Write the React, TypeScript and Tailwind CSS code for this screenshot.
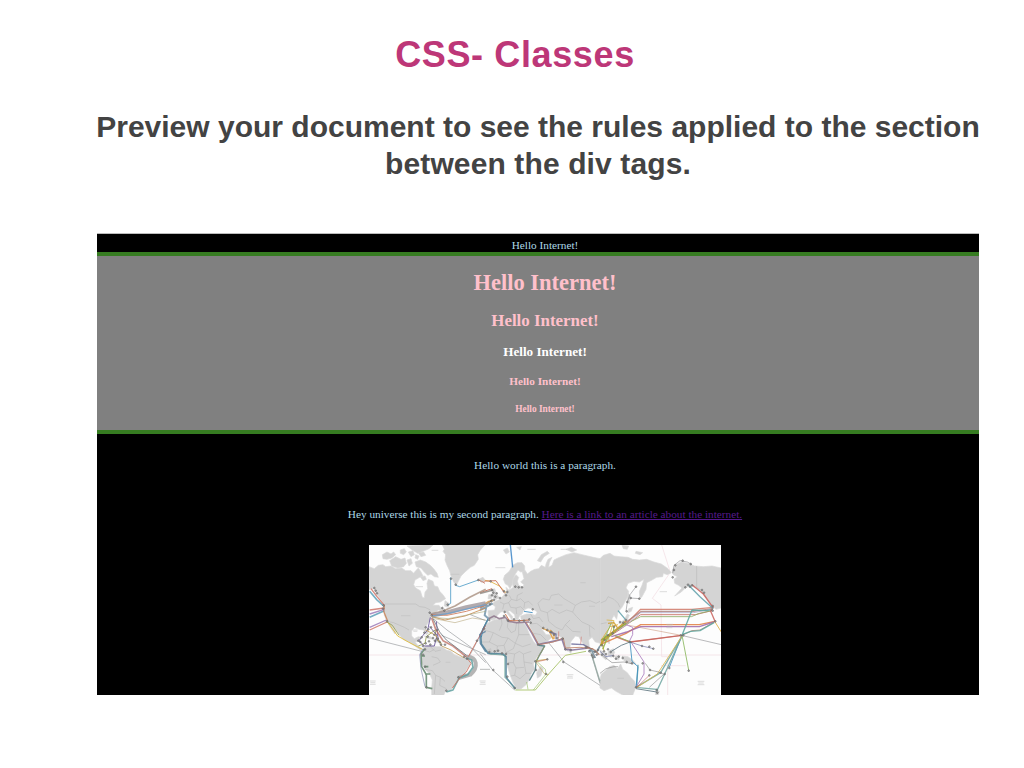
type Line = [color: string, d: string, width?: number];

const AMERICAS_LAND = [
  // Canada, United States and Mexico
  "M12 80L28 86 40 76 54 74 62 80 78 78 92 86 110 84 122 92 138 92 146 100 152 92 160 84 168 96 174 108 164 112 150 120 146 134 152 144 166 152 172 172 178 174 180 156 188 146 186 130 190 118 204 124 208 138 218 140 224 154 234 164 242 176 226 186 212 188 204 196 222 196 228 204 238 206 230 214 220 210 210 220 198 226 198 238 188 250 182 262 190 280 184 284 176 270 162 268 148 262 140 272 140 288 148 296 160 290 168 292 162 304 150 306 160 318 172 326 166 330 150 318 134 308 114 298 106 288 94 272 80 256 92 276 90 282 76 262 66 244 58 226 56 206 58 194 46 178 34 160 26 146 12 148Z",
  // Arctic islands
  "M52 44L66 36 78 42 86 36 92 44 80 54 66 58 54 56ZM74 62L92 50 108 58 120 54 124 70 116 80 98 84 80 78ZM106 30L118 26 124 36 116 44 106 40ZM130 36L144 32 148 44 138 50ZM152 44L162 48 158 58 150 54ZM126 60L138 56 142 70 132 78ZM150 66L166 60 182 66 196 76 206 86 216 100 220 112 208 110 198 102 188 106 178 96 168 84 154 80ZM126 18L176 15 204 15 192 26 174 34 158 40 142 30ZM160 38L176 36 182 46 168 50ZM166 110L180 108 184 118 174 122Z",
  // Greenland
  "M232 15L238 28 234 34 242 44 240 60 246 76 254 92 258 108 266 126 274 136 280 124 288 108 300 96 316 82 328 76 340 58 338 44 346 30 360 15Z",
  // Newfoundland and Caribbean
  "M240 182L252 190 250 202 238 198ZM178 288L196 290 206 298 190 296ZM208 300L224 300 222 306 208 306Z",
  // South America
  "M176 322L188 316 200 318 216 320 230 320 244 330 258 334 268 344 284 350 302 354 316 362 314 376 304 390 300 406 284 414 276 430 266 440 256 452 242 452 236 466 200 466 200 444 202 420 194 402 180 388 170 368 172 344 178 332Z",
  "M340 118L354 112 360 120 350 128Z",
];

const EURASIA_LAND = [
  // Europe and Asia
  "M26 232L24 212 44 210 46 200 36 192 46 184 60 178 72 164 80 154 78 142 86 150 92 148 100 142 96 128 98 118 108 104 116 112 112 124 116 136 128 142 132 134 122 126 132 116 126 92 136 92 142 102 152 94 164 88 176 86 184 76 196 82 198 72 204 58 216 52 208 68 206 82 216 76 222 60 234 54 258 44 282 38 306 44 340 52 361 56 361 310 346 306 336 292 326 300 328 320 318 326 306 306 296 290 286 288 272 306 270 322 262 334 254 318 248 296 238 288 218 286 206 274 190 262 186 268 198 284 208 284 216 292 202 304 176 316 168 300 158 278 148 256 152 244 136 242 124 242 122 228 140 222 152 222 166 226 172 216 158 206 144 204 132 210 126 222 118 228 114 240 106 238 104 224 90 212 84 214 98 230 96 240 88 228 76 214 62 216 52 226 46 238 34 240Z",
  // Scandinavia
  "M76 132L70 118 74 106 88 94 98 76 112 68 126 68 134 78 134 94 122 96 114 90 106 102 100 116 96 134 90 146 84 136Z",
  // Britain, Ireland and the Mediterranean islands
  "M36 148L44 146 50 162 58 174 44 180 38 170ZM26 164L36 162 34 176 24 176ZM84 238L96 242 90 246Z",
  // Novaya Zemlya and arctic islands
  "M172 62L184 44 202 34 208 40 192 50 182 66ZM70 30L82 24 88 36 78 42ZM110 22L124 20 120 30ZM258 28L274 22 290 30 276 36Z",
  // Africa
  "M22 250L42 240 64 236 80 238 84 246 98 250 116 246 132 250 140 262 148 282 160 304 172 318 194 318 184 338 170 352 160 372 164 388 154 400 148 418 138 434 124 446 110 448 100 430 90 404 82 378 80 358 72 344 52 342 32 344 16 332 4 314 4 288 12 270Z",
  // Madagascar and Sri Lanka
  "M182 378L190 386 182 408 172 414 170 398ZM270 326L276 332 272 340 266 334Z",
];

const PACIFIC_LAND = [
  // East Asia and Siberia
  "M0 56L10 46 30 40 42 48 60 50 84 52 98 58 118 60 140 58 162 66 184 72 204 86 214 98 202 104 190 100 188 110 170 112 156 120 140 128 138 148 126 170 120 176 118 154 126 136 132 118 118 126 102 124 84 130 78 144 86 154 80 176 66 202 54 216 50 238 42 226 36 236 38 252 24 264 20 284 6 298 0 306Z",
  "M82 156L90 166 88 192 82 182ZM86 206L98 202 94 214 84 218ZM82 222L88 226 80 244 66 252 56 250 72 240ZM22 292L30 298 28 312 20 304Z",
  "M66 16L86 18 82 28 70 26ZM108 34L128 38 120 44 106 40Z",
  // Alaska
  "M216 92L228 74 244 66 262 70 284 78 310 80 336 78 364 84 364 204 348 208 334 196 322 178 308 158 292 146 274 138 258 142 244 156 224 168 246 144 236 136 224 130 222 118 232 110 220 104Z",
  // Indonesia and New Guinea
  "M0 330L14 338 22 352 18 360 4 348ZM24 334L40 326 44 338 34 352 24 348ZM46 348L60 346 56 360 46 358ZM66 348L84 350 100 362 108 372 90 370 72 362Z",
  // Australia
  "M0 418L4 402 16 392 28 380 42 376 52 386 62 372 68 388 82 398 92 412 104 424 108 440 98 466 70 466 48 454 34 444 12 452 0 444Z",
  "M168 448L178 454 174 466 166 466Z",
];

const AMERICAS_BORDERS = [
  "M60 192H152L164 200 180 202 196 210M66 244L86 248 104 256 118 262 132 270M174 330L194 336 208 328M196 320L210 334 228 330M200 350L218 354 226 366 204 376M180 388L202 392 212 406 226 412 240 424M212 406L208 462M226 412L224 436 244 446",
];

const EURASIA_BORDERS = [
  "M12 270L40 278 66 292 84 294M64 236L66 252 58 272M84 246L82 262 94 278 106 272 110 248M116 248V284L106 310M40 278L28 306 4 306M28 306L52 318 72 316 84 294 106 310M116 284H148M52 318L50 342M72 316L78 338 100 326 106 310 128 320 152 312M78 338L104 342 118 334 130 342 154 334M104 342L100 368 84 368M130 342L132 366 156 370M100 368L108 384 132 382M108 384L104 406 92 408M132 366L138 400 154 400M104 406L120 416 138 400M20 332L32 326 34 344",
  "M60 186L72 192 86 188 94 178 110 182 122 176 134 188 146 184 158 196M72 192L68 208M86 188L92 202 108 204 122 200 134 212M94 178L88 166M110 182L112 166 128 158M108 204L110 222M134 188L132 204",
  "M174 190L188 176 208 180 214 166 236 162 252 176 266 184 286 196 304 186 330 182 348 190 360 184M286 196L278 216 290 230 306 246 328 256 344 268M174 190L182 212 202 218 216 208 238 220 260 210 278 216M202 218L206 244 228 262 246 270 256 254 270 240M150 252L170 250 188 264M160 280L182 284 198 300M152 222L160 236 178 232 188 246M256 254L278 274 302 276M328 256L330 290",
];

const PACIFIC_BORDERS = ["M0 190L18 182 24 170 42 178 54 190 60 202M0 252L20 248M290 78V142L304 150 320 174"];

const AMERICAS_CABLES: Line[] = [
  ["#529fc8", "M257 112V190L248 196M272 136L284 140 340 120", 3],
  ["#c06c58", "M340 120L350 124 360 130", 3],
  ["#ad9586", "M196 222L232 214 270 198 314 172 362 148", 5],
  ["#a49b9f", "M200 226L246 218 304 202 362 190", 13],
  ["#ce7a58", "M198 224L246 226 304 214 362 196", 3],
  ["#6fa0cb", "M202 228L250 220 310 206 362 194", 4],
  ["#c98f56", "M200 230L240 240 300 228 362 204", 3],
  ["#a3a375", "M202 232L250 236 362 214", 2],
  ["#b5a478", "M208 236L270 248 322 234 362 240", 2],
  ["#85888c", "M14 294L170 334M200 232L246 270 318 322 362 368M310 354L362 256M230 286L362 344M316 224L362 242", 2],
  ["#5b9fb7", "M14 154L36 180 58 200M14 232L58 212", 5],
  ["#ce7568", "M14 210L58 204M14 270L66 246M18 146L36 170 58 196", 4],
  ["#c98458", "M58 196L56 214 68 244", 4],
  ["#9b7ab8", "M14 222L58 208M14 262L64 240", 4],
  ["#e0bb35", "M66 244L98 288 130 306 172 328", 3],
  ["#959d4f", "M66 246L82 256 102 286M160 318L180 310 184 290 210 270 216 300 230 310", 3],
  ["#67539a", "M196 232L188 270 174 286 162 302 178 318 208 318 216 286 194 260M214 244L220 302", 3],
  ["#c47c72", "M200 234L212 268 234 302 264 318 306 352", 5],
  ["#747c83", "M204 236L224 276 244 300 310 350", 3],
  ["#c39f59", "M182 270L212 286 230 318 258 330 298 354", 3],
  ["#a8a8a8", "M306 350C336 350 342 382 316 404L280 414", 12],
  ["#62876c", "M178 328L168 342 170 380 184 404V442L202 446M170 348H180M178 380H190M180 402H196", 5],
  ["#6d77a3", "M174 326L164 344 168 386 180 440", 2],
  ["#60a0a0", "M302 354L320 360 324 382 308 404 282 414 264 450 244 456", 5],
  ["#ce705e", "M306 354L318 370 304 396 286 412 262 444M310 350L336 302", 3],
  ["#5b82a0", "M362 274L344 284 346 310 362 336", 4],
  ["#b65453", "M336 302L362 256", 2],
];

const EURASIA_CABLES: Line[] = [
  ["#3984c5", "M91 14L98 82", 4],
  ["#e0b040", "M0 118L30 124 58 138 78 158", 3],
  ["#c96b52", "M0 124L48 122 74 160M0 158L36 146", 3],
  ["#928c86", "M0 204L18 194 38 178M0 160L40 150", 5],
  ["#d09a57", "M0 200L26 184 40 182", 4],
  ["#7294ab", "M0 210L16 202 38 190M20 194L14 226 26 236", 6],
  ["#8d758b", "M26 236L42 228 58 236 76 232 86 244 110 248 148 246", 5],
  ["#c9683e", "M76 222L88 242 118 242 148 240", 3],
  ["#3889c0", "M24 236L10 264 4 292M132 214L158 218", 3],
  ["#4c7f96", "M24 238L2 282 4 312 24 340 68 342 78 350V412L106 446", 5],
  ["#5fa08f", "M28 342L74 346V412L108 448", 2],
  ["#a3bf61", "M106 450H166L206 402 256 346 318 334", 3],
  ["#806f99", "M136 248L156 280 174 314 246 298 256 328 278 330 326 324", 5],
  ["#c0836a", "M138 246L158 280 176 314 220 306 250 294 256 324 300 322 340 326", 3],
  ["#48777b", "M176 316L194 318 176 350 168 366 166 390 148 422", 4],
  ["#c0a555", "M194 320L180 342 168 362 200 358 166 364 194 402 206 404", 2],
  ["#cf6c62", "M168 366L204 358M236 274V296M304 290L302 312", 2],
  ["#8dba57", "M168 362L196 388 198 402 160 450M140 426L144 448", 2],
  ["#e09b3a", "M186 264L208 274 220 298M210 270L222 282V298", 4],
  ["#71709e", "M208 276L228 282 228 298M274 312L310 314 330 324", 4],
  ["#85888b", "M0 340L38 390 104 450M0 388H30M206 308L252 366 360 436M330 330L360 430", 2],
  ["#8fa59d", "M334 340L360 424", 4],
  ["#708b9a", "M326 330L350 336 360 318M332 326L346 354", 5],
  ["#a57560", "M318 320L344 330 358 344", 4],
];

const PACIFIC_CABLES: Line[] = [
  ["#858589", "M108 140L90 164 82 186 78 214M90 174L120 176M218 100L222 76 240 62 262 66 276 74M244 286L364 314", 2],
  ["#c9977a", "M86 256L244 286", 2],
  ["#cf7867", "M0 302L44 276 84 246 122 208H276L340 202", 4],
  ["#ad837e", "M10 296L70 252 124 214H280L338 206", 4],
  ["#c76d63", "M0 308L58 270 122 224H286L336 212", 3],
  ["#8fae67", "M12 296L66 258 122 230H274L298 220 334 212", 3],
  ["#b3aeca", "M22 286L76 258 122 218H280L334 208", 3],
  ["#e07c40", "M0 314L78 280 122 254H298L344 244", 4],
  ["#9c66a9", "M34 290L80 276 122 260H298L342 246", 4],
  ["#c58b75", "M92 306L246 286 276 272 300 270 344 246", 3],
  ["#59a59c", "M246 286L276 210 320 212 338 208M246 284L272 274 300 272 342 248", 4],
  ["#c9605b", "M90 306L246 286M46 290L90 306M276 134L310 162 340 204M340 200L332 214 346 246", 4],
  ["#5f9fa9", "M266 136L300 170 340 206M54 212L76 238M114 374L110 442", 4],
  ["#e0b040", "M344 244L364 276M12 332L4 300 30 260 54 254", 3],
  ["#8bb75e", "M246 286L266 390M44 286L96 308M34 248L20 282 0 318", 3],
  ["#3d8fc0", "M246 286L208 382M90 306L96 364 114 380 108 444", 3],
  ["#ac7cbe", "M88 304L98 284V262L78 254M94 308L132 366V402L108 442", 3],
  ["#6ea4a0", "M246 288L182 398 108 442M246 288L194 402 170 454M108 442L170 448", 4],
  ["#dbb74f", "M108 444L172 402 246 288M24 300L42 242 20 240", 3],
  ["#c45652", "M108 444L148 406M12 304L0 318", 2],
  ["#5f7580", "M108 446L170 456M34 334L64 316 90 306", 3],
  ["#5b629f", "M90 306L126 318 160 326M0 334L18 350 42 346", 2],
  ["#808080", "M136 370L150 390 176 396 194 404M148 442L190 404M0 400L18 386 42 380 54 380M10 348L36 368 72 366 98 372", 2],
  ["#8fb03d", "M4 300L24 286 40 278 42 258M8 328L22 294 50 270 78 250M2 318L16 288", 4],
  ["#d0a030", "M2 312L28 284 50 268 78 242M24 250L42 248 54 266", 4],
];

const AMERICAS_NODES =
  "28,144 32,152 36,160 56,196 54,206 66,244 194,218 200,226 232,204 238,212 182,262 190,268 198,262 178,278 170,292 166,306 182,310 196,314 210,302 218,296 224,306 208,284 180,328 174,344 180,380 184,442 298,350 306,356 280,412 244,452 336,302 248,194 258,116 272,134 340,120 240,314 216,270 192,304 160,302 188,290 204,294 228,314 174,318";
const EURASIA_NODES =
  "32,124 36,150 40,158 36,166 42,180 34,184 30,192 46,170 50,160 60,174 72,154 82,156 78,166 106,140 116,142 126,142 74,216 72,228 84,242 102,238 118,242 132,242 148,238 152,248 28,240 12,266 28,336 44,334 54,332 66,340 78,342 84,372 82,410 174,314 190,264 202,270 214,276 222,284 232,294 248,296 256,328 272,330 318,322 328,334 336,346 350,344 344,336 354,330 340,352 166,364 202,358 198,402 250,366 168,390 40,390 104,444 158,208";
const PACIFIC_NODES =
  "108,140 92,174 82,186 80,214 118,176 256,142 264,134 270,140 276,136 306,150 312,158 338,198 338,212 346,244 242,286 250,286 90,306 78,240 70,248 60,246 42,260 38,280 24,286 14,300 6,316 12,334 18,342 24,328 32,336 6,344 40,348 48,356 56,350 68,354 80,366 96,370 128,370 150,390 148,406 182,398 194,402 208,384 266,392 108,442 170,450 172,458 126,318 148,320 160,326 218,112 222,90 226,76 248,62 272,72";

type RegionProps = { x: number; land: string[]; borders: string[]; cables: Line[]; nodes: string };

function Region({ x, land, borders, cables, nodes }: RegionProps) {
  return (
    <g transform={`translate(${x} -15)`}>
      {land.map((d) => (
        <path key={d} d={d} fill="#d4d4d4" stroke="#d9d9d9" strokeWidth="2" strokeLinejoin="round" />
      ))}
      {borders.map((d) => (
        <path key={d} d={d} fill="none" stroke="#b4b4b4" strokeWidth="1.5" />
      ))}
      {cables.map(([color, d, width = 3]) => (
        <path key={d} d={d} fill="none" stroke={color} strokeWidth={width} strokeLinejoin="round" opacity="0.85" />
      ))}
      {nodes.split(" ").map((p) => {
        const [cx, cy] = p.split(",");
        return <circle key={p} cx={cx} cy={cy} r="2.6" fill="#999" stroke="#5c5c5c" strokeWidth="2" opacity="0.85" />;
      })}
    </g>
  );
}

function CableMap() {
  return (
    <svg className="block h-[150px] w-[352px] bg-[#fdfdfd]" viewBox="0 0 1056 450">
      <path d="M0 330H1056M878 0L904 82 850 160 876 180 878 335H896V450M876 362H950" fill="none" stroke="#f1dbe1" strokeWidth="2" />
      <Region x={693} land={PACIFIC_LAND} borders={PACIFIC_BORDERS} cables={PACIFIC_CABLES} nodes={PACIFIC_NODES} />
      <Region x={333} land={EURASIA_LAND} borders={EURASIA_BORDERS} cables={EURASIA_CABLES} nodes={EURASIA_NODES} />
      <Region x={-12} land={AMERICAS_LAND} borders={AMERICAS_BORDERS} cables={AMERICAS_CABLES} nodes={AMERICAS_NODES} />
      <path
        d="M2 408h18M4 413h15M3 418h17M332 408h18M334 413h15M332 418h18M593 389h20M595 394h16M594 399h18M986 409h20M988 414h16M986 419h20M892 238h20M894 243h16M892 248h18M130 255h16M133 259h12M96 212h28M140 125h22M188 16h20M245 88h26M379 68h30M475 13h25M575 13h18M634 113h16M556 180h24M660 184h18M872 140h22M745 400h20M230 352h14"
        stroke="#bcbcbc"
        strokeWidth="2"
        opacity="0.75"
      />
    </svg>
  );
}

export default function App() {
  return (
    <main className="flex h-[768px] w-[1024px] flex-col overflow-hidden bg-white">
      <h1 className="mt-[33px] ml-[6px] text-center font-['Liberation_Sans',sans-serif] text-[36px] leading-[44px] font-bold tracking-[0.62px] text-[#bd3778]">
        CSS- Classes
      </h1>
      <p className="mt-[31px] ml-[52px] text-center font-['Liberation_Sans',sans-serif] text-[30px] leading-[37px] font-bold whitespace-nowrap text-[#434343]">
        Preview your document to see the rules applied to the section
        <br />
        <span className="tracking-[0.12px]">between the div tags.</span>
      </p>
      <section className="mt-[51px] ml-[97px] flex h-[462px] w-[882px] flex-col overflow-hidden border-t border-[#bcbcbc] bg-black text-center font-['Liberation_Serif',serif] text-[11.25px] text-[#add8e6]">
        <p className="h-[18px] pt-[4px] pl-[14px] leading-[14px]">Hello Internet!</p>
        <div className="h-[182px] border-t-[4px] border-b-[4px] border-[#367c21] bg-[#808080] pl-[14px] font-bold text-[#ffc0cb]">
          <h1 className="mt-[13px] text-[22.5px] leading-[28px]">Hello Internet!</h1>
          <h2 className="mt-[13px] text-[16.9px] leading-[22px]">Hello Internet!</h2>
          <h3 className="mt-[11px] text-[13.15px] leading-[18px] text-white">Hello Internet!</h3>
          <h4 className="mt-[12px] text-[11.25px] leading-[16px]">Hello Internet!</h4>
          <h5 className="mt-[14px] text-[9.35px] leading-[12px]">Hello Internet!</h5>
        </div>
        <p className="mt-[23px] pl-[14px] leading-[16px]">Hello world this is a paragraph.</p>
        <p className="mt-[33px] pl-[14px] leading-[16px]">
          Hey universe this is my second paragraph. <a className="text-[#551a8b] underline">Here is a link to an article about the internet.</a>
        </p>
        <div className="mt-[23px] ml-[272px]">
          <CableMap />
        </div>
      </section>
    </main>
  );
}
